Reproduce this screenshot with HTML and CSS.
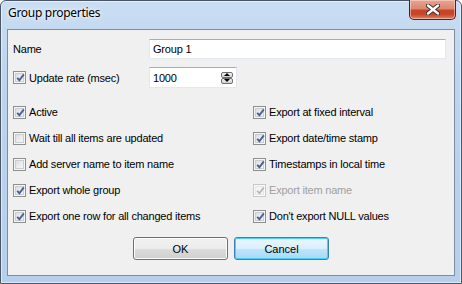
FILE: index.html
```html
<!DOCTYPE html>
<html lang="en">
<head>
    <meta charset="UTF-8">
    <title>Group properties</title>
    <link rel="stylesheet" href="styles.css">
</head>
<body>
    <div class="window">
        <!-- Aero title bar -->
        <div class="titlebar">
            <span class="title">Group properties</span>
            <button class="close-btn" aria-label="Close">
                <svg width="14" height="11" viewBox="0 0 14 11">
                    <path d="M2 1.5 L12 9.5 M12 1.5 L2 9.5" stroke="#3a2a28" stroke-width="4.2" stroke-linecap="round"/>
                    <path d="M2 1.5 L12 9.5 M12 1.5 L2 9.5" stroke="#ffffff" stroke-width="2.4" stroke-linecap="round"/>
                </svg>
            </button>
        </div>

        <div class="client">
            <div class="row name-row">
                <label class="field-label">Name</label>
                <div class="textbox name-box">Group 1</div>
            </div>

            <div class="row rate-row">
                <label class="check field-label">
                    <span class="cb checked"></span>
                    Update rate (msec)
                </label>
                <div class="textbox spin-box">
                    <span>1000</span>
                    <span class="spin">
                        <span class="spin-btn"><svg width="6" height="3" viewBox="0 0 6 3"><path d="M0 3 L3 0 L6 3Z" fill="#000"/></svg></span>
                        <span class="spin-btn"><svg width="6" height="3" viewBox="0 0 6 3"><path d="M0 0 L6 0 L3 3Z" fill="#000"/></svg></span>
                    </span>
                </div>
            </div>

            <div class="options">
                <label class="check"><span class="cb checked"></span>Active</label>
                <label class="check"><span class="cb checked"></span>Export at fixed interval</label>
                <label class="check"><span class="cb"></span>Wait till all items are updated</label>
                <label class="check"><span class="cb checked"></span>Export date/time stamp</label>
                <label class="check"><span class="cb"></span>Add server name to item name</label>
                <label class="check"><span class="cb checked"></span>Timestamps in local time</label>
                <label class="check"><span class="cb checked"></span>Export whole group</label>
                <label class="check disabled"><span class="cb checked"></span>Export item name</label>
                <label class="check"><span class="cb checked"></span>Export one row for all changed items</label>
                <label class="check"><span class="cb checked"></span>Don't export NULL values</label>
            </div>

            <div class="buttons">
                <button class="btn">OK</button>
                <button class="btn default">Cancel</button>
            </div>
        </div>
    </div>
</body>
</html>
```

FILE: styles.css
```css
/* Win7 basic dialog look */
:root {
    --face: #f0f0f0;
    --text: #000000;
    --ui-font: 'Liberation Sans', Arial, sans-serif;
}

* {
    margin: 0;
    padding: 0;
    box-sizing: border-box;
}

body {
    width: 462px;
    height: 284px;
    overflow: hidden;
    background: #ffffff;
    font-family: var(--ui-font);
    font-size: 11px;
    letter-spacing: -0.2px;
    color: var(--text);
}

/* Window frame */
.window {
    width: 462px;
    height: 284px;
    border: 1px solid #4a5566;
    border-radius: 6px 6px 0 0;
    background: linear-gradient(180deg, #c9ddf3 0%, #bcd4ee 30%, #b6cfea 100%);
    box-shadow: inset 0 0 0 1px rgba(255,255,255,0.55);
    padding: 0 6px 7px 6px;
    display: flex;
    flex-direction: column;
}

.titlebar {
    height: 28px;
    display: flex;
    align-items: flex-start;
    justify-content: space-between;
    position: relative;
}

.title {
    font-family: 'Noto Sans', 'Open Sans', sans-serif;
    font-size: 12px;
    line-height: 12px;
    letter-spacing: -0.3px;
    padding: 6px 0 0 1px;
    color: #000;
    text-shadow: 0 0 6px #ffffff, 0 0 3px #ffffff;
}

.close-btn {
    position: absolute;
    top: -1px;
    right: -1px;
    width: 47px;
    height: 20px;
    border: 1px solid #56201a;
    border-top: none;
    border-radius: 0 0 5px 5px;
    background: linear-gradient(180deg, #e8a593 0%, #dc8770 45%, #c94428 55%, #c8452a 75%, #dc8464 100%);
    box-shadow: inset 0 0 0 1px rgba(255,220,210,0.55);
    display: flex;
    align-items: center;
    justify-content: center;
}

/* Client area */
.client {
    flex: 1;
    background: var(--face);
    border: 1px solid #7d8da3;
    padding: 9px 8px 0 5px;
    display: flex;
    flex-direction: column;
}

.row {
    display: flex;
    align-items: center;
}

.field-label {
    width: 136px;
    flex-shrink: 0;
}

.textbox {
    background: #ffffff;
    border: 1px solid #e2e8ee;
    border-top-color: #abadb3;
    display: flex;
    align-items: center;
    padding-left: 3px;
}

.name-box {
    width: 297px;
    height: 20px;
}

.rate-row {
    margin-top: 8px;
}

.spin-box {
    width: 88px;
    height: 21px;
    justify-content: space-between;
    padding-right: 3px;
}

.spin {
    display: flex;
    flex-direction: column;
}

.spin-btn {
    width: 12px;
    height: 6px;
    border: 1px solid #707070;
    border-radius: 2px;
    background: linear-gradient(180deg, #f2f2f2, #d4d4d4);
    display: flex;
    align-items: center;
    justify-content: center;
}

/* Checkboxes */
.check {
    display: flex;
    align-items: center;
    gap: 3px;
    white-space: nowrap;
}

.cb {
    width: 13px;
    height: 13px;
    flex-shrink: 0;
    border: 1px solid #8e8f8f;
    background: linear-gradient(135deg, #d6d8db 0%, #eeeeef 60%, #fbfbfb 100%);
    box-shadow: inset 0 0 0 1px #f6f6f6, inset 0 0 0 2px #c9ccd1;
    position: relative;
}

.cb.checked::after {
    content: '';
    position: absolute;
    left: 2px;
    top: 1px;
    width: 9px;
    height: 9px;
    background: url("data:image/svg+xml;utf8,<svg xmlns='http://www.w3.org/2000/svg' width='9' height='9' viewBox='0 0 9 9'><path d='M1.2 4.8 L3.4 7.2 L7.8 1.4' fill='none' stroke='%234a5f92' stroke-width='1.9'/></svg>") no-repeat;
}

.check.disabled {
    color: #a0a0a0;
}

.check.disabled .cb {
    border-color: #c8c8c8;
    background: #f4f4f4;
    box-shadow: inset 0 0 0 1px #fbfbfb, inset 0 0 0 2px #e6e6e6;
}

.check.disabled .cb.checked::after {
    background: url("data:image/svg+xml;utf8,<svg xmlns='http://www.w3.org/2000/svg' width='9' height='9' viewBox='0 0 9 9'><path d='M1.2 4.8 L3.4 7.2 L7.8 1.4' fill='none' stroke='%23b4b4b4' stroke-width='1.7'/></svg>") no-repeat;
}

.options {
    margin-top: 11px;
    display: grid;
    grid-template-columns: 240px 1fr;
    grid-auto-rows: 26px;
}

/* Dialog buttons */
.buttons {
    margin-top: 8px;
    margin-left: 3px;
    display: flex;
    justify-content: center;
    gap: 6px;
}

.btn {
    width: 95px;
    height: 23px;
    font-family: var(--ui-font);
    font-size: 11px;
    color: #000;
    border: 1px solid #707070;
    border-radius: 3px;
    background: linear-gradient(180deg, #f2f2f2 0%, #ebebeb 50%, #dddddd 50%, #cfcfcf 100%);
    box-shadow: inset 0 0 0 1px #fcfcfc;
}

.btn.default {
    border-color: #3c7fb1;
    background: linear-gradient(180deg, #eaf6fd 0%, #d9f0fc 50%, #bee6fd 50%, #a7d9f5 100%);
    box-shadow: inset 0 0 0 1px #48d0f8;
}
```
